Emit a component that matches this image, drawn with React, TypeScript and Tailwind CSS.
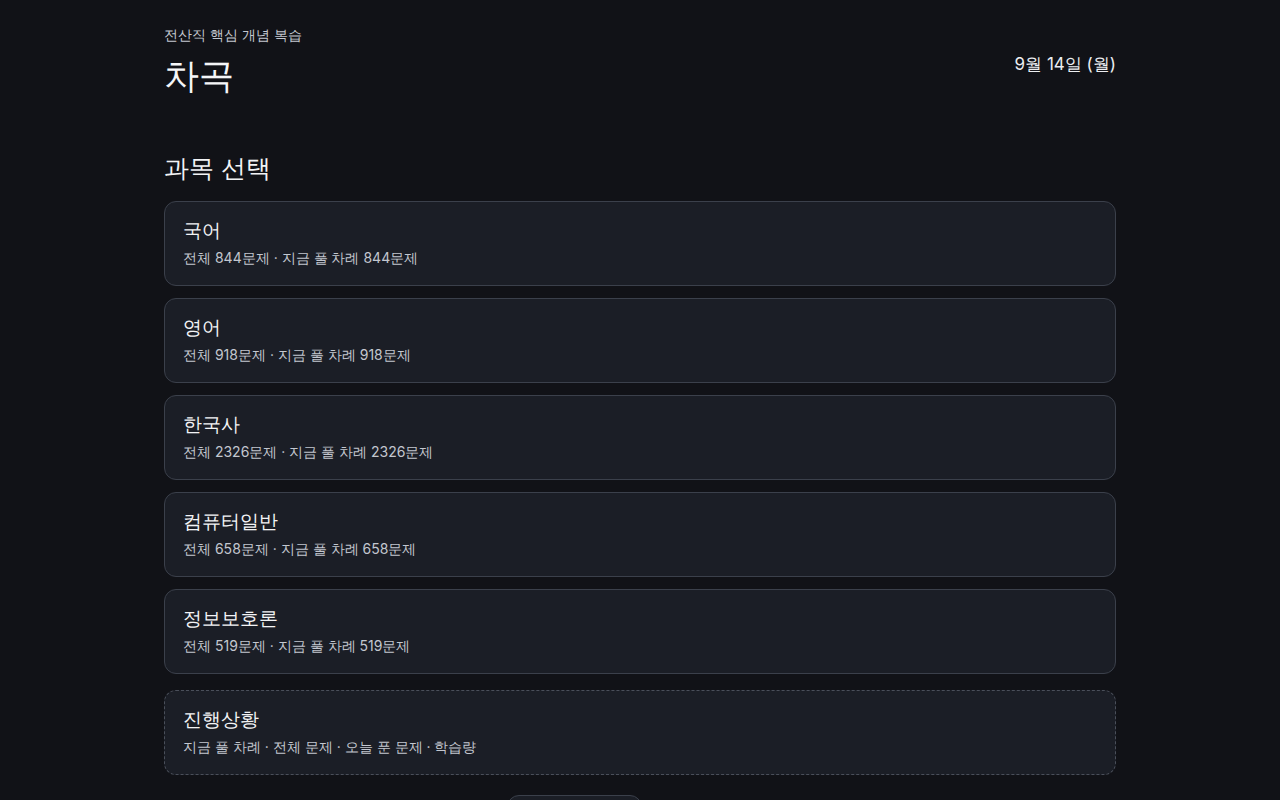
import React from 'react';

interface Subject {
  name: string;
  total: number;
  due: number;
}

const subjects: Subject[] = [
  { name: '국어', total: 844, due: 844 },
  { name: '영어', total: 918, due: 918 },
  { name: '한국사', total: 2326, due: 2326 },
  { name: '컴퓨터일반', total: 658, due: 658 },
  { name: '정보보호론', total: 519, due: 519 },
];

function SubjectCard({ subject }: { subject: Subject }) {
  return (
    <button
      type="button"
      className="flex h-[85px] w-full flex-col items-start rounded-xl border border-[#3b404b] bg-[#1b1e26] px-[18px] pt-[15px] text-left"
    >
      <span className="text-[19px] leading-7 text-[#f2f3f5]">{subject.name}</span>
      <span className="mt-[3px] text-sm leading-5 text-[#c3c7cf]">
        전체 {subject.total}문제 · 지금 풀 차례 {subject.due}문제
      </span>
    </button>
  );
}

export default function App() {
  return (
    <div
      className="min-h-screen bg-[#111217] text-white"
      style={{ fontFamily: 'Inter, sans-serif' }}
    >
      <div className="mx-auto w-[952px] pt-[25px] pb-10">
        {/* Header */}
        <header className="flex items-start justify-between">
          <div>
            <p className="text-sm leading-5 text-[#c3c7cf]">전산직 핵심 개념 복습</p>
            <h1 className="mt-[10px] text-[35px] leading-10 text-[#f5f6f8]">차곡</h1>
          </div>
          <p className="mt-[25px] text-[17px] leading-7 text-[#eceef2]">9월 14일 (월)</p>
        </header>

        {/* Subjects */}
        <section className="mt-[55px]">
          <h2 className="text-[25px] leading-9 text-[#f2f3f5]">과목 선택</h2>
          <div className="mt-[15px] flex flex-col gap-3">
            {subjects.map((s) => (
              <SubjectCard key={s.name} subject={s} />
            ))}
          </div>

          <button
            type="button"
            className="mt-4 flex h-[85px] w-full flex-col items-start rounded-xl border border-dashed border-[#4a4f5a] bg-[#1b1e26] px-[18px] pt-[15px] text-left"
          >
            <span className="text-[19px] leading-7 text-[#f2f3f5]">진행상황</span>
            <span className="mt-[3px] text-sm leading-5 text-[#c3c7cf]">
              지금 풀 차례 · 전체 문제 · 오늘 푼 문제 · 학습량
            </span>
          </button>

          <div className="mt-5 flex justify-center">
            <button
              type="button"
              className="ml-[-131px] h-10 w-[135px] rounded-xl border border-[#3b404b] bg-[#1b1e26] text-sm text-[#c3c7cf]"
            >
              데이터 관리
            </button>
          </div>
        </section>
      </div>
    </div>
  );
}
